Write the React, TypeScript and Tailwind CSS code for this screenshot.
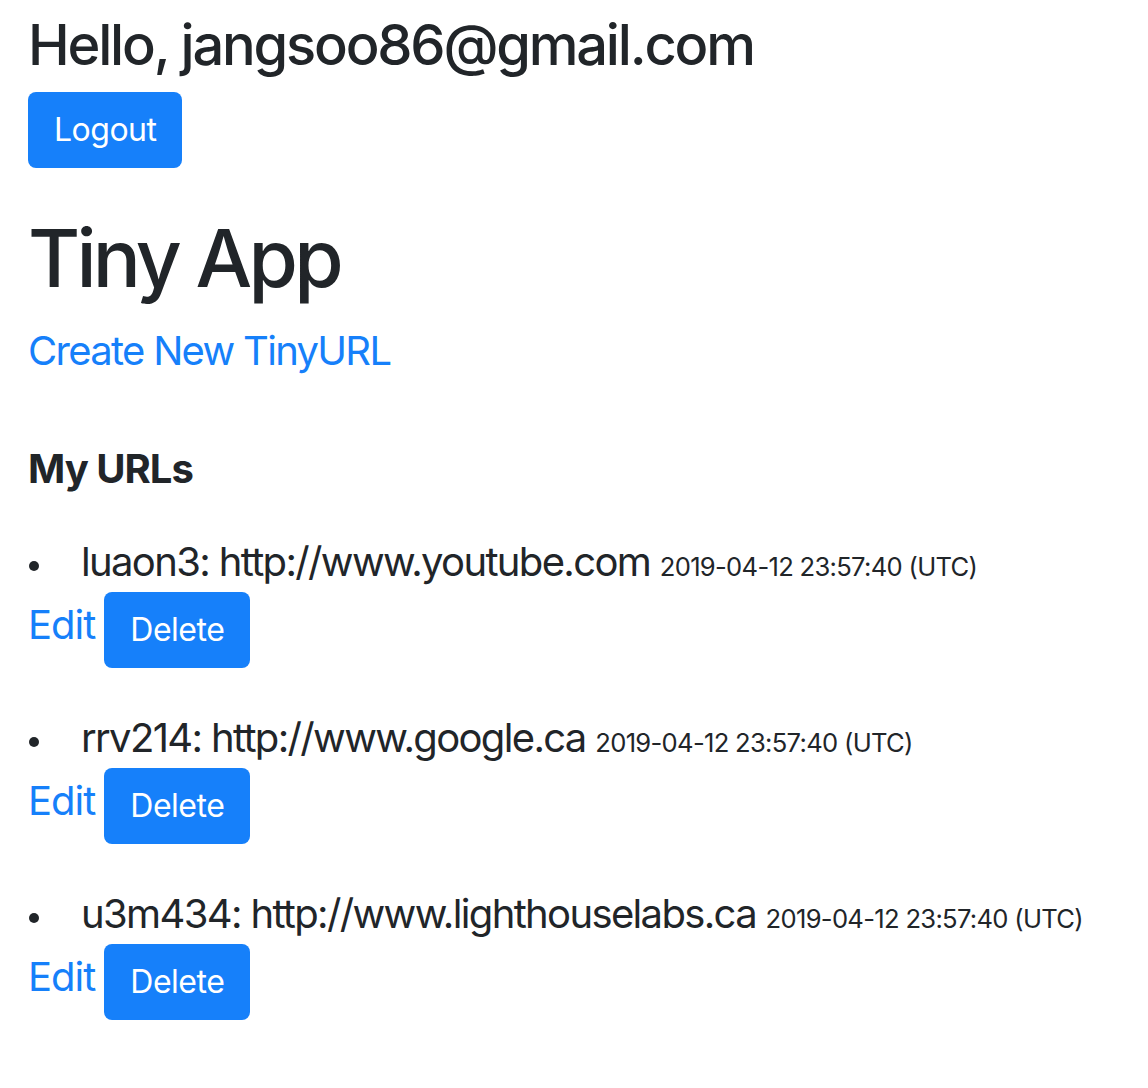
import React from "react";

const urls = [
  { id: "luaon3", url: "http://www.youtube.com" },
  { id: "rrv214", url: "http://www.google.ca" },
  { id: "u3m434", url: "http://www.lighthouselabs.ca" },
];

export default function App() {
  return (
    <div
      className="min-h-[1088px] w-[1148px] bg-white pl-[28px] pt-[12px] text-[#212529]"
      style={{ fontFamily: "Inter, 'Noto Sans', sans-serif" }}
    >
      <h3 className="m-0 text-[56px] font-medium leading-[1.2] tracking-[-2.2px]">Hello, jangsoo86@gmail.com</h3>
      <button className="mt-[13px] flex h-[76px] items-center rounded-[8px] bg-[#1680fa] px-[26px] text-[32px] leading-none tracking-[-0.5px] text-white">
        Logout
      </button>
      <h1 className="mt-[42px] text-[80px] font-medium leading-[96px] tracking-[-3.8px]">Tiny App</h1>
      <a className="mt-[21px] block text-[40px] leading-[48px] tracking-[-1.7px] text-[#1680fa]" href="#">
        Create New TinyURL
      </a>
      <h5 className="mt-[70px] text-[40px] font-bold leading-[48px] tracking-[-1px]">My URLs</h5>
      <ul className="mt-[45px] flex flex-col gap-[46px]">
        {urls.map((u) => (
          <li key={u.id} className="flex flex-col">
            <div className="flex items-center text-[40px] leading-[48px] tracking-[-1.65px]">
              <span className="mr-[42px] ml-[1px] mt-[2px] inline-block h-[10px] w-[10px] shrink-0 rounded-full bg-[#212529]" />
              <span className="whitespace-nowrap">
                {u.id}: {u.url}{" "}
                <span className="text-[25.6px] tracking-[-0.7px]">2019-04-12 23:57:40 (UTC)</span>
              </span>
            </div>
            <div className="mt-[1px] flex items-start gap-[9px]">
              <a href="#" className="mt-[9px] text-[40px] leading-[48px] tracking-[-1px] text-[#1680fa]">
                Edit
              </a>
              <button className="flex h-[76px] items-center rounded-[8px] bg-[#1680fa] px-[26px] text-[32px] leading-none tracking-[-0.5px] text-white">
                Delete
              </button>
            </div>
          </li>
        ))}
      </ul>
    </div>
  );
}
